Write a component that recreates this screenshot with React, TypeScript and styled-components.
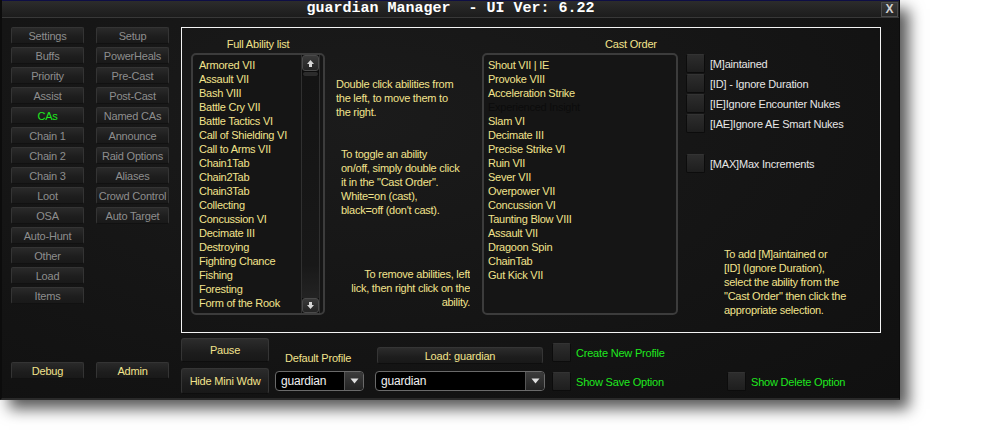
import React from 'react';
import styled, { createGlobalStyle } from 'styled-components';

const GlobalStyle = createGlobalStyle`
  html, body {
    margin: 0;
    padding: 0;
    background: #ffffff;
  }
  body {
    width: 990px;
    height: 440px;
    overflow: hidden;
    font-family: "Liberation Sans", Arial, sans-serif;
  }
`;

const YELLOW = '#f2e38c';
const GREEN = '#1fe81f';

const Window = styled.div`
  width: 900px;
  height: 400px;
  background: radial-gradient(ellipse at 40% 30%, #1b1b1b 0%, #131313 70%, #101010 100%);
  box-shadow: 9px 9px 14px rgba(0, 0, 0, 0.65);
  display: flex;
  flex-direction: column;
  box-sizing: border-box;
  border-left: 2px solid #0c0c0c;
  border-right: 1px solid #0c0c0c;
  border-bottom: 2px solid #2a2a2a;
`;

const TitleBar = styled.div`
  height: 16px;
  flex: 0 0 16px;
  display: flex;
  align-items: center;
  background: linear-gradient(#2c2c2c, #1c1c1c);
  border-top: 1px solid #0e0e45;
  border-bottom: 1px solid #383838;
`;

const Title = styled.div`
  flex: 1;
  text-align: center;
  color: #ffffff;
  font-family: "Liberation Mono", "Courier New", monospace;
  font-weight: bold;
  font-size: 15px;
  line-height: 16px;
  white-space: pre;
  padding-left: 18px;
`;

const CloseButton = styled.div`
  width: 15px;
  height: 13px;
  margin-right: 1px;
  background: linear-gradient(#3a3a3a, #262626);
  border: 1px solid #4a4a4a;
  color: #d0d0d0;
  font-family: "Liberation Sans", Arial, sans-serif;
  font-weight: bold;
  font-size: 12px;
  line-height: 13px;
  text-align: center;
`;

const Body = styled.div`
  display: flex;
  padding: 9px 0 0 9px;
`;

const LeftNav = styled.div`
  width: 158px;
  height: 352px;
  display: flex;
  flex-direction: column;
  justify-content: space-between;
`;

const NavColumns = styled.div`
  display: flex;
  gap: 12px;
  align-items: flex-start;
`;

const NavColumn = styled.div`
  display: flex;
  flex-direction: column;
  gap: 3px;
`;

const NavButton = styled.div<{ $color?: string }>`
  width: 73px;
  height: 17px;
  box-sizing: border-box;
  display: flex;
  align-items: center;
  justify-content: center;
  background: linear-gradient(#2a2a2a, #1d1d1d 60%, #191919);
  border: 1px solid #343434;
  border-bottom-color: #111;
  border-radius: 2px;
  color: ${(p) => p.$color || '#8e8e8e'};
  font-size: 11px;
  letter-spacing: -0.2px;
  white-space: nowrap;
`;

const Main = styled.div`
  width: 700px;
  margin-left: 12px;
  display: flex;
  flex-direction: column;
`;

const Panel = styled.div`
  height: 306px;
  box-sizing: border-box;
  border: 1px solid #f4f4f4;
  padding: 9px 0 17px 9px;
  display: flex;
`;

const ListColumn = styled.div<{ $width: number }>`
  width: ${(p) => p.$width}px;
  display: flex;
  flex-direction: column;
`;

const ColumnLabel = styled.div<{ $indent?: number }>`
  height: 14px;
  line-height: 14px;
  color: ${YELLOW};
  font-size: 11px;
  letter-spacing: -0.2px;
  padding-left: ${(p) => p.$indent || 0}px;
  text-align: ${(p) => (p.$indent ? 'left' : 'center')};
  margin-bottom: 2px;
`;

const ListBox = styled.div`
  height: 262px;
  box-sizing: border-box;
  border: 2px solid #3c3c3c;
  border-radius: 5px;
  background: #151515;
  display: flex;
  overflow: hidden;
`;

const ListItems = styled.div<{ $pad: number }>`
  flex: 1;
  padding: 3px 0 0 ${(p) => p.$pad}px;
`;

const ListItem = styled.div<{ $off?: boolean }>`
  height: 14px;
  line-height: 14px;
  font-size: 11px;
  letter-spacing: -0.25px;
  white-space: nowrap;
  color: ${(p) => (p.$off ? '#0c0c0c' : YELLOW)};
`;

const ScrollBar = styled.div`
  width: 17px;
  margin-right: 3px;
  display: flex;
  flex-direction: column;
  background: #0d0d0d;
  border-left: 1px solid #303030;
  border-right: 1px solid #303030;
`;

const ScrollButton = styled.div<{ $h: number }>`
  height: ${(p) => p.$h}px;
  display: flex;
  align-items: center;
  justify-content: center;
  background: linear-gradient(#3a3a3a, #242424);
  border: 1px solid #4a4a4a;
  border-radius: 3px;
`;

const ScrollThumb = styled.div`
  height: 4px;
  margin: 1px 1px 0;
  background: #2c2c2c;
  border-radius: 2px;
`;

const ScrollTrack = styled.div`
  flex: 1;
  background: linear-gradient(#141414, #181818 85%, #232323);
`;

const HelpColumn = styled.div`
  width: 157px;
  display: flex;
  flex-direction: column;
`;

const HelpText = styled.div<{ $top: number; $left?: number; $align?: string; $width?: number }>`
  margin-top: ${(p) => p.$top}px;
  padding-left: ${(p) => p.$left || 0}px;
  width: ${(p) => (p.$width ? `${p.$width}px` : 'auto')};
  text-align: ${(p) => p.$align || 'left'};
  color: ${YELLOW};
  font-size: 11px;
  line-height: 14px;
  letter-spacing: -0.25px;
  white-space: nowrap;
  overflow: hidden;
`;

const OptionColumn = styled.div`
  flex: 1;
  margin-left: 8px;
  padding-top: 17px;
  display: flex;
  flex-direction: column;
`;

const OptionRow = styled.div<{ $gap?: number; $color?: string }>`
  display: flex;
  align-items: center;
  height: 19px;
  margin-bottom: ${(p) => p.$gap ?? 1}px;
  color: ${(p) => p.$color || '#e6e6e6'};
  font-size: 11px;
  letter-spacing: -0.2px;
  white-space: nowrap;
`;

const CheckBox = styled.div`
  width: 19px;
  height: 19px;
  box-sizing: border-box;
  flex: 0 0 19px;
  margin-right: 5px;
  background: linear-gradient(#2d2d2d, #1e1e1e);
  border: 1px solid #0c0c0c;
  border-top-color: #333;
  border-radius: 2px;
`;

const InfoText = styled.div`
  margin-top: auto;
  margin-bottom: -2px;
  padding-left: 38px;
  color: ${YELLOW};
  font-size: 11px;
  line-height: 14px;
  letter-spacing: -0.25px;
  white-space: nowrap;
`;

const BottomBar = styled.div`
  display: flex;
  margin-top: 5px;
`;

const BottomCol = styled.div<{ $left?: number; $top?: number; $width?: number; $gap?: number }>`
  display: flex;
  flex-direction: column;
  margin-left: ${(p) => p.$left || 0}px;
  padding-top: ${(p) => p.$top || 0}px;
  width: ${(p) => (p.$width ? `${p.$width}px` : 'auto')};
  gap: ${(p) => p.$gap || 0}px;
`;

const BigButton = styled.div<{ $h: number; $w: number; $indent?: number }>`
  width: ${(p) => p.$w}px;
  height: ${(p) => p.$h}px;
  margin-left: ${(p) => p.$indent || 0}px;
  box-sizing: border-box;
  display: flex;
  align-items: center;
  justify-content: center;
  background: linear-gradient(#2c2c2c, #1d1d1d 60%, #181818);
  border: 1px solid #353535;
  border-bottom-color: #0e0e0e;
  border-radius: 3px;
  color: ${YELLOW};
  font-size: 11px;
  letter-spacing: -0.2px;
  white-space: nowrap;
`;

const ProfileLabel = styled.div`
  height: 14px;
  line-height: 14px;
  padding-left: 10px;
  margin-bottom: 6px;
  color: ${YELLOW};
  font-size: 11px;
  letter-spacing: -0.2px;
  white-space: nowrap;
`;

const Dropdown = styled.div<{ $w: number }>`
  width: ${(p) => p.$w}px;
  height: 20px;
  box-sizing: border-box;
  display: flex;
  align-items: center;
  background: #000;
  border: 1px solid #6a6a6a;
  border-radius: 4px;
  overflow: hidden;
`;

const DropdownText = styled.div`
  flex: 1;
  padding-left: 5px;
  color: #f0f0f0;
  font-size: 12px;
  letter-spacing: -0.2px;
`;

const DropdownArrow = styled.div`
  width: 18px;
  height: 18px;
  display: flex;
  align-items: center;
  justify-content: center;
  background: linear-gradient(#3c3c3c, #222);
  border-left: 1px solid #555;
  border-radius: 0 3px 3px 0;
`;

const abilities = [
  'Armored VII',
  'Assault VII',
  'Bash VIII',
  'Battle Cry VII',
  'Battle Tactics VI',
  'Call of Shielding VI',
  'Call to Arms VII',
  'Chain1Tab',
  'Chain2Tab',
  'Chain3Tab',
  'Collecting',
  'Concussion VI',
  'Decimate III',
  'Destroying',
  'Fighting Chance',
  'Fishing',
  'Foresting',
  'Form of the Rook',
];

const castOrder: { name: string; off?: boolean }[] = [
  { name: 'Shout VII | IE' },
  { name: 'Provoke VIII' },
  { name: 'Acceleration Strike' },
  { name: 'Experienced Insight', off: true },
  { name: 'Slam VI' },
  { name: 'Decimate III' },
  { name: 'Precise Strike VI' },
  { name: 'Ruin VII' },
  { name: 'Sever VII' },
  { name: 'Overpower VII' },
  { name: 'Concussion VI' },
  { name: 'Taunting Blow VIII' },
  { name: 'Assault VII' },
  { name: 'Dragoon Spin' },
  { name: 'ChainTab' },
  { name: 'Gut Kick VII' },
];

const navLeft = [
  'Settings',
  'Buffs',
  'Priority',
  'Assist',
  'CAs',
  'Chain 1',
  'Chain 2',
  'Chain 3',
  'Loot',
  'OSA',
  'Auto-Hunt',
  'Other',
  'Load',
  'Items',
];

const navRight = [
  'Setup',
  'PowerHeals',
  'Pre-Cast',
  'Post-Cast',
  'Named CAs',
  'Announce',
  'Raid Options',
  'Aliases',
  'Crowd Control',
  'Auto Target',
];

const Arrow = ({ up }: { up?: boolean }) => (
  <svg width="9" height="9" viewBox="0 0 9 9">
    {up ? (
      <path d="M4.5 1 L8 5 L6 5 L6 8 L3 8 L3 5 L1 5 Z" fill="#d8d8d8" />
    ) : (
      <path d="M4.5 8 L8 4 L6 4 L6 1 L3 1 L3 4 L1 4 Z" fill="#d8d8d8" />
    )}
  </svg>
);

const DropArrow = () => (
  <svg width="9" height="6" viewBox="0 0 9 6">
    <path d="M0.5 0.5 L8.5 0.5 L4.5 5.5 Z" fill="#e0e0e0" />
  </svg>
);

const App: React.FC = () => {
  return (
    <>
      <GlobalStyle />
      <Window>
        <TitleBar>
          <Title>{'guardian Manager  - UI Ver: 6.22'}</Title>
          <CloseButton>X</CloseButton>
        </TitleBar>
        <Body>
          <LeftNav>
            <NavColumns>
              <NavColumn>
                {navLeft.map((n) => (
                  <NavButton key={n} $color={n === 'CAs' ? GREEN : undefined}>
                    {n}
                  </NavButton>
                ))}
              </NavColumn>
              <NavColumn>
                {navRight.map((n) => (
                  <NavButton key={n}>{n}</NavButton>
                ))}
              </NavColumn>
            </NavColumns>
            <NavColumns>
              <NavButton $color={YELLOW}>Debug</NavButton>
              <NavButton $color={YELLOW}>Admin</NavButton>
            </NavColumns>
          </LeftNav>
          <Main>
            <Panel>
              <ListColumn $width={134}>
                <ColumnLabel>Full Ability list</ColumnLabel>
                <ListBox>
                  <ListItems $pad={6}>
                    {abilities.map((a) => (
                      <ListItem key={a}>{a}</ListItem>
                    ))}
                  </ListItems>
                  <ScrollBar>
                    <ScrollButton $h={14}>
                      <Arrow up />
                    </ScrollButton>
                    <ScrollThumb />
                    <ScrollTrack />
                    <ScrollButton $h={13}>
                      <Arrow />
                    </ScrollButton>
                  </ScrollBar>
                </ListBox>
              </ListColumn>
              <HelpColumn>
                <HelpText $top={40} $left={11}>
                  Double click abilities from
                  <br />
                  the left, to move them to
                  <br />
                  the right.
                </HelpText>
                <HelpText $top={28} $left={16} $width={136}>
                  To toggle an ability
                  <br />
                  on/off, simply double click
                  <br />
                  it in the "Cast Order".
                  <br />
                  White=on (cast),
                  <br />
                  black=off (don't cast).
                </HelpText>
                <HelpText $top={50} $align="right" $width={145}>
                  To remove abilities, left
                  <br />
                  lick, then right click on the
                  <br />
                  ability.
                </HelpText>
              </HelpColumn>
              <ListColumn $width={196}>
                <ColumnLabel $indent={123}>Cast Order</ColumnLabel>
                <ListBox>
                  <ListItems $pad={4}>
                    {castOrder.map((c, i) => (
                      <ListItem key={i} $off={c.off}>
                        {c.name}
                      </ListItem>
                    ))}
                  </ListItems>
                </ListBox>
              </ListColumn>
              <OptionColumn>
                <OptionRow>
                  <CheckBox />
                  [M]aintained
                </OptionRow>
                <OptionRow>
                  <CheckBox />
                  [ID] - Ignore Duration
                </OptionRow>
                <OptionRow>
                  <CheckBox />
                  [IE]Ignore Encounter Nukes
                </OptionRow>
                <OptionRow $gap={21}>
                  <CheckBox />
                  [IAE]Ignore AE Smart Nukes
                </OptionRow>
                <OptionRow>
                  <CheckBox />
                  [MAX]Max Increments
                </OptionRow>
                <InfoText>
                  To add [M]aintained or
                  <br />
                  [ID] (Ignore Duration),
                  <br />
                  select the ability from the
                  <br />
                  "Cast Order" then click the
                  <br />
                  appropriate selection.
                </InfoText>
              </OptionColumn>
            </Panel>
            <BottomBar>
              <BottomCol $gap={6}>
                <BigButton $w={88} $h={24}>
                  Pause
                </BigButton>
                <BigButton $w={88} $h={26}>
                  Hide Mini Wdw
                </BigButton>
              </BottomCol>
              <BottomCol $left={6} $top={13} $width={89}>
                <ProfileLabel>Default Profile</ProfileLabel>
                <Dropdown $w={89}>
                  <DropdownText>guardian</DropdownText>
                  <DropdownArrow>
                    <DropArrow />
                  </DropdownArrow>
                </Dropdown>
              </BottomCol>
              <BottomCol $left={11} $top={9} $width={170} $gap={7}>
                <BigButton $w={166} $h={17} $indent={2}>
                  Load: guardian
                </BigButton>
                <Dropdown $w={170}>
                  <DropdownText>guardian</DropdownText>
                  <DropdownArrow>
                    <DropArrow />
                  </DropdownArrow>
                </Dropdown>
              </BottomCol>
              <BottomCol $left={7} $top={5} $width={175}>
                <OptionRow $gap={10} $color={GREEN}>
                  <CheckBox />
                  Create New Profile
                </OptionRow>
                <OptionRow $color={GREEN}>
                  <CheckBox />
                  Show Save Option
                </OptionRow>
              </BottomCol>
              <BottomCol $top={34}>
                <OptionRow $color={GREEN}>
                  <CheckBox />
                  Show Delete Option
                </OptionRow>
              </BottomCol>
            </BottomBar>
          </Main>
        </Body>
      </Window>
    </>
  );
};

export default App;
